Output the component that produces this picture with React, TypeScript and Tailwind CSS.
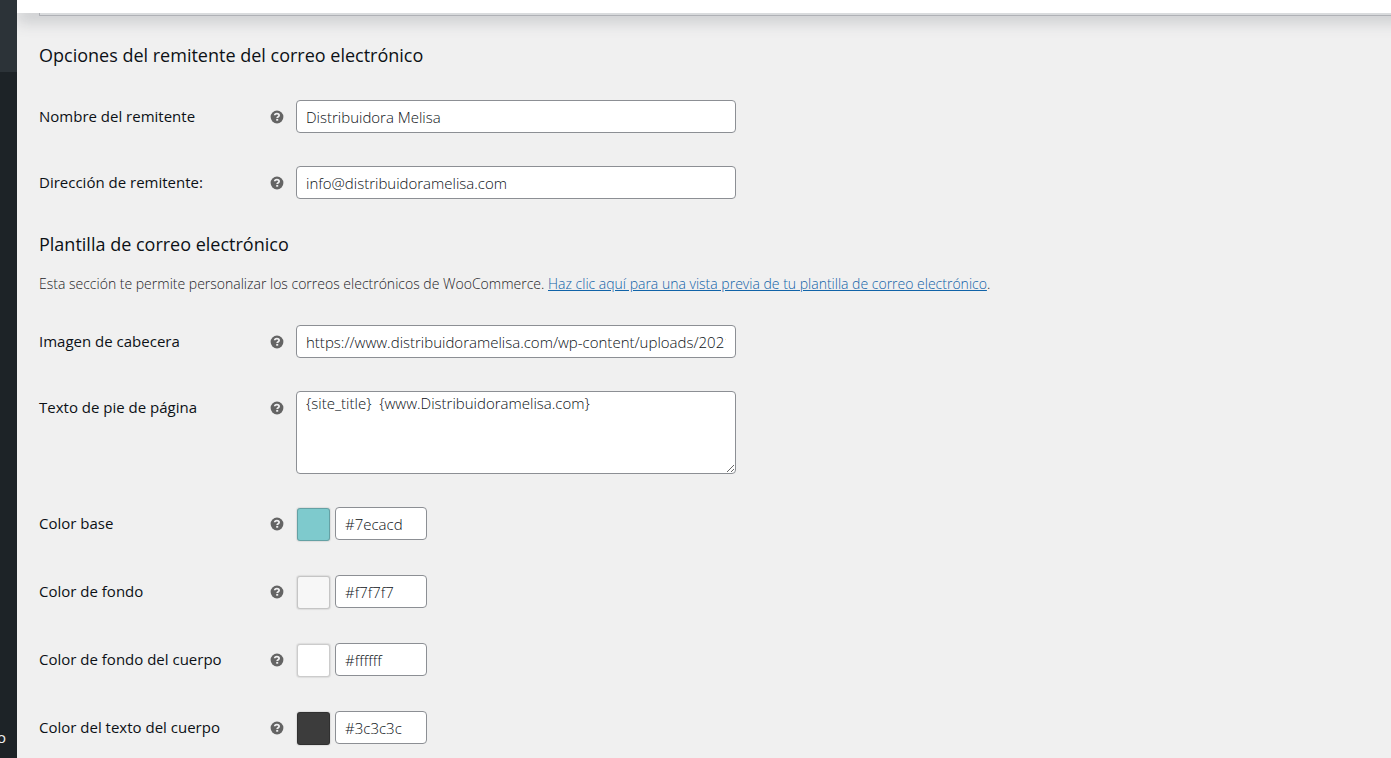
import type { ReactNode } from "react";

const inputClass =
  "h-[33px] rounded-[4px] border border-[#8c8f94] bg-white px-[9px] text-[15px] leading-5 font-light text-[#0c1116]";

function HelpTip({ label }: { label: string }) {
  return (
    <button type="button" aria-label={`Ayuda: ${label}`} className="mt-[10px] h-[14px] w-[14px]">
      <svg viewBox="0 0 14 14" className="block h-[14px] w-[14px]" aria-hidden="true">
        <circle cx="7" cy="7" r="6.4" fill="#646464" />
        <path
          d="M4.7 5.3C4.8 4.1 5.7 3.6 6.9 3.6c1.3 0 2.2.6 2.2 1.6 0 .8-.4 1.1-1 1.6-.6.4-.9.6-.9 1.3"
          fill="none"
          stroke="#f0f0f1"
          strokeWidth="1.8"
        />
        <rect x="6.2" y="8.9" width="2" height="1.8" fill="#f0f0f1" />
      </svg>
    </button>
  );
}

function Row({ id, label, children }: { id: string; label: string; children: ReactNode }) {
  return (
    <div className="grid grid-cols-[231px_26px_minmax(0,1fr)] items-start">
      <label htmlFor={id} className="pt-[6px] text-[15px] leading-5 font-medium text-[#0c1116]">
        {label}
      </label>
      <HelpTip label={label} />
      {children}
    </div>
  );
}

function TextRow({ id, label, value }: { id: string; label: string; value: string }) {
  return (
    <Row id={id} label={label}>
      <input id={id} type="text" defaultValue={value} className={`${inputClass} w-full max-w-[440px]`} />
    </Row>
  );
}

function ColorRow({ id, label, value }: { id: string; label: string; value: string }) {
  return (
    <Row id={id} label={label}>
      <div className="flex h-[35px] items-start gap-[5px]">
        <span
          className="mt-px ml-px h-[33px] w-[33px] rounded-[3px] border border-black/20 shadow-[0_0_1px_1px_rgba(0,0,0,0.08)]"
          style={{ backgroundColor: value }}
        />
        <input id={id} type="text" defaultValue={value} className={`${inputClass} w-[92px]`} />
      </div>
    </Row>
  );
}

const colors = [
  { id: "base", label: "Color base", value: "#7ecacd" },
  { id: "background", label: "Color de fondo", value: "#f7f7f7" },
  { id: "body-background", label: "Color de fondo del cuerpo", value: "#ffffff" },
  { id: "body-text", label: "Color del texto del cuerpo", value: "#3c3c3c" },
];

export default function App() {
  return (
    <div className="flex h-screen overflow-hidden bg-[#f0f0f0] font-['Open_Sans','Noto_Sans',sans-serif] text-[#1d2327]">
      <nav className="z-20 flex w-[17px] shrink-0 flex-col justify-between overflow-hidden bg-[#1d2327]">
        <div className="h-[72px] bg-[#2c3338]" />
        <a href="#menu" className="mb-[11px] self-end pr-[11px] text-[15px] leading-5 text-[#f0f0f1]">
          o
        </a>
      </nav>
      <div className="flex min-w-0 flex-1 flex-col">
        <header className="z-10 -mr-8 h-[13px] shrink-0 bg-white shadow-[0_8px_16px_0_rgba(85,93,102,0.3)]" />
        <main className="flex-1 pl-[22px]">
          <div className="h-[3px] border-b border-l border-[#c3c4c7] bg-[#f6f7f7]" />
          <form>
            <h2 className="mt-[27px] text-[18px] leading-6 font-medium text-[#0c1116]">
              Opciones del remitente del correo electrónico
            </h2>
            <div className="mt-[33px] flex flex-col gap-[33px]">
              <TextRow id="from-name" label="Nombre del remitente" value="Distribuidora Melisa" />
              <TextRow id="from-address" label="Dirección de remitente:" value="info@distribuidoramelisa.com" />
            </div>
            <h2 className="mt-[33px] text-[18px] leading-6 font-medium text-[#0c1116]">
              Plantilla de correo electrónico
            </h2>
            <p className="mt-[18px] text-[14px] leading-5 font-light">
              Esta sección te permite personalizar los correos electrónicos de WooCommerce.{" "}
              <a href="#vista-previa" className="text-[#1063a8] underline">
                Haz clic aquí para una vista previa de tu plantilla de correo electrónico
              </a>
              .
            </p>
            <div className="mt-[31px] flex flex-col gap-[33px]">
              <TextRow
                id="header-image"
                label="Imagen de cabecera"
                value="https://www.distribuidoramelisa.com/wp-content/uploads/2021/03/logo.png"
              />
              <Row id="footer-text" label="Texto de pie de página">
                <textarea
                  id="footer-text"
                  defaultValue="{site_title}  {www.Distribuidoramelisa.com}"
                  className="block h-[83px] w-full max-w-[440px] rounded-[4px] border border-[#8c8f94] bg-white px-[9px] py-px text-[15px] leading-5 font-light text-[#0c1116]"
                />
              </Row>
              {colors.map((c) => (
                <ColorRow key={c.id} {...c} />
              ))}
            </div>
          </form>
        </main>
      </div>
    </div>
  );
}
